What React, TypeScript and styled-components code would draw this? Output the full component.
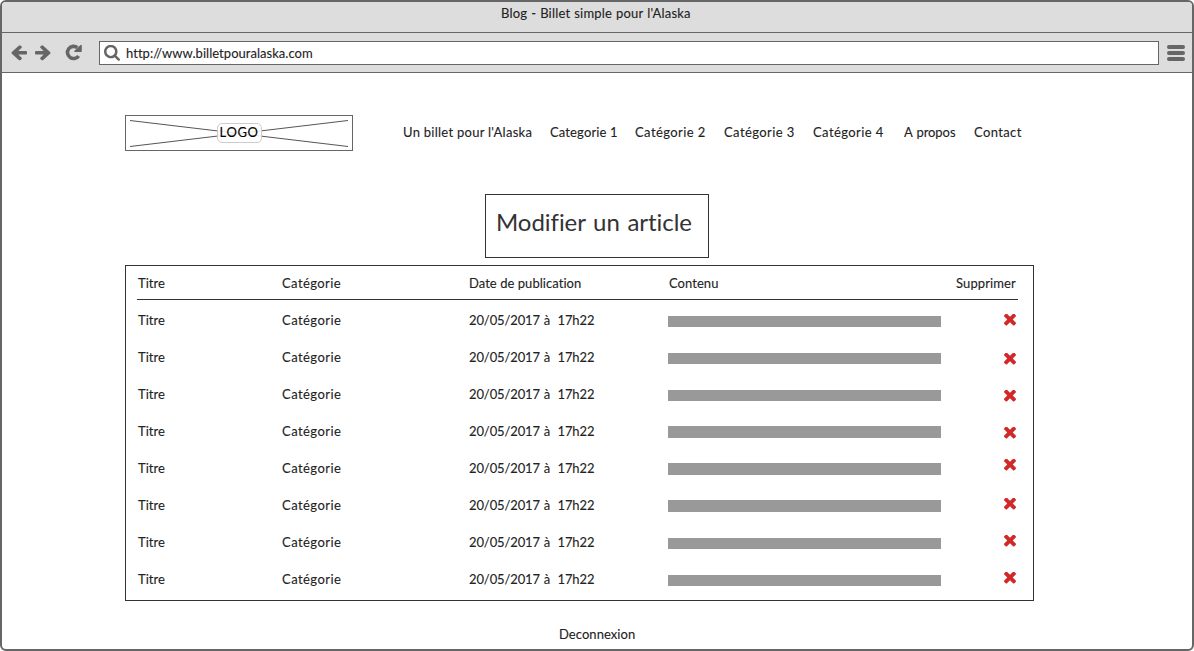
import React from "react";
import styled, { createGlobalStyle } from "styled-components";

const GlobalStyle = createGlobalStyle`
  * { box-sizing: border-box; }
  body { margin: 0; background: #fff; }
`;

const Window = styled.div`
  width: 1194px;
  height: 651px;
  border: 2px solid #666;
  border-radius: 6px;
  overflow: hidden;
  background: #fff;
  color: #222;
  font: 13px/20px Lato, "Liberation Sans", sans-serif;
  -webkit-text-stroke: 0.1px currentColor;
  white-space: pre;
`;

const Text = styled.span<{ $spacing?: number; $words?: number }>`
  letter-spacing: ${(p) => p.$spacing ?? 0}px;
  word-spacing: ${(p) => p.$words ?? 0}px;
`;

const TitleBar = styled.header`
  height: 31px;
  padding: 1px 0 0 499px;
  background: #ddd;
  border-bottom: 1px solid #666;
`;

const Toolbar = styled.div`
  height: 40px;
  display: flex;
  align-items: center;
  padding: 0 7px 0 8px;
  background: #ddd;
  border-bottom: 1px solid #666;
`;

const Glyph = styled.svg<{ $gap?: number }>`
  display: block;
  flex: none;
  margin-right: ${(p) => p.$gap ?? 0}px;
  fill: #666;
`;

const AddressBar = styled.div`
  width: 1060px;
  height: 24px;
  display: flex;
  align-items: center;
  margin-right: 8px;
  padding-left: 4px;
  border: 1px solid #666;
  background: #fff;
`;

const MenuButton = styled.div`
  width: 18px;
  display: grid;
  gap: 2px;
`;

const MenuBar = styled.div`
  height: 4px;
  border-radius: 2px;
  background: #666;
`;

const Page = styled.main`
  width: 909px;
  margin-left: 123px;
  padding-top: 42px;
`;

const Masthead = styled.div`
  display: flex;
  height: 36px;
  margin-bottom: 43px;
`;

const Logo = styled.div`
  position: relative;
  width: 228px;
  height: 36px;
  display: flex;
  align-items: center;
  justify-content: center;
  border: 1px solid #666;
`;

const LogoCross = styled.svg`
  position: absolute;
  inset: 0;
  stroke: #555;
  stroke-width: 1;
`;

const LogoLabel = styled.div`
  position: relative;
  width: 45px;
  height: 20px;
  padding-left: 2px;
  line-height: 17px;
  border: 1px solid #ccc;
  border-radius: 5px;
  background: rgba(255, 255, 255, 0.85);
  color: #000;
`;

const Nav = styled.nav`
  display: grid;
  grid-template-columns: 147px 85px 89px 89px 91px 70px 60px;
  padding: 7px 0 0 50px;
`;

const Heading = styled.h1`
  width: 224px;
  height: 64px;
  margin: 0 0 7px 360px;
  padding: 12px 0 0 10px;
  border: 1px solid #333;
  color: #333;
  font-size: 24px;
  font-weight: 400;
  line-height: 30px;
  -webkit-text-stroke: 0;
`;

const Table = styled.section`
  height: 336px;
  padding: 0 15px 0 11px;
  border: 1px solid #333;
`;

const Row = styled.div`
  height: 37px;
  display: grid;
  grid-template-columns: 144px 187px 200px 287px 63px;
  line-height: 37px;

  > ${Text} {
    padding-left: 1px;
  }
`;

const HeaderRow = styled(Row)`
  height: 34px;
  margin-bottom: 2px;
  border-bottom: 1px solid #333;
  line-height: 35px;
`;

const Bar = styled.div<{ $top: number; $height: number }>`
  width: 273px;
  height: ${(p) => p.$height}px;
  margin-top: ${(p) => p.$top}px;
  background: #999;
`;

const DeleteIcon = styled.svg<{ $top: number }>`
  display: block;
  margin: ${(p) => p.$top}px 0 0 49px;
  fill: #d22828;
`;

const Footer = styled.footer`
  padding: 23px 0 0 434px;
`;

const links: { label: string; spacing: number; words?: number }[] = [
  { label: "Un billet pour l'Alaska", spacing: 0.27 },
  { label: "Categorie 1", spacing: 0.14 },
  { label: "Catégorie 2", spacing: 0.42 },
  { label: "Catégorie 3", spacing: 0.42 },
  { label: "Catégorie 4", spacing: 0.42 },
  { label: "A propos", spacing: -0.05, words: 0.8 },
  { label: "Contact", spacing: 0.38 },
];

const rows = [
  { barTop: 14, barHeight: 11, iconTop: 12 },
  { barTop: 14, barHeight: 11, iconTop: 14 },
  { barTop: 14, barHeight: 11, iconTop: 14 },
  { barTop: 13, barHeight: 12, iconTop: 14 },
  { barTop: 13, barHeight: 12, iconTop: 9 },
  { barTop: 13, barHeight: 12, iconTop: 11 },
  { barTop: 14, barHeight: 11, iconTop: 11 },
  { barTop: 14, barHeight: 11, iconTop: 11 },
];

const ARROW =
  "M1664 896v128q0 53-32.5 90.5t-84.5 37.5h-704l293 294q38 36 38 90t-38 90l-75 76q-37 37-90 37-52 0-91-37l-651-652q-37-37-37-90 0-52 37-91l651-650q38-38 91-38 52 0 90 38l75 74q38 38 38 91t-38 91l-293 293h704q52 0 84.5 37.5t32.5 90.5z";
const SEARCH =
  "M1216 832q0-185-131.5-316.5t-316.5-131.5-316.5 131.5-131.5 316.5 131.5 316.5 316.5 131.5 316.5-131.5 131.5-316.5zm512 832q0 52-38 90t-90 38q-54 0-90-38l-343-342q-179 124-399 124-143 0-273.5-55.5t-225-150-150-225-55.5-273.5 55.5-273.5 150-225 225-150 273.5-55.5 273.5 55.5 225 150 150 225 55.5 273.5q0 220-124 399l343 343q37 37 37 90z";
const CROSS =
  "M1490 1322q0 40-28 68l-136 136q-28 28-68 28t-68-28l-294-294-294 294q-28 28-68 28t-68-28l-136-136q-28-28-28-68t28-68l294-294-294-294q-28-28-28-68t28-68l136-136q28-28 68-28t68 28l294 294 294-294q28-28 68-28t68 28l136 136q28 28 28 68t-28 68l-294 294 294 294q28 28 28 68z";

export default function App() {
  return (
    <Window>
      <GlobalStyle />
      <TitleBar>
        <Text $spacing={0.2} $words={0.4}>Blog - Billet simple pour l'Alaska</Text>
      </TitleBar>
      <Toolbar>
        <Glyph width="17" height="16" viewBox="53 154 1611 1660" preserveAspectRatio="none" $gap={8}>
          <path d={ARROW} />
        </Glyph>
        <Glyph width="17" height="16" viewBox="53 154 1611 1660" preserveAspectRatio="none" $gap={13}>
          <path d={ARROW} transform="translate(1717 0) scale(-1 1)" />
        </Glyph>
        <Glyph width="17" height="17" viewBox="0 0 17 17" $gap={17}>
          <path
            d="M13.6 11.9A6.1 6.1 0 1 1 12.4 3.7"
            style={{ fill: "none", stroke: "#666", strokeWidth: 3.6 }}
          />
          <path d="M16.8 1.4V7.2Q16.8 7.9 16.1 7.9H9.8Q8.7 7.6 9.4 6.7L15.6 .9Q16.6 .4 16.8 1.4Z" />
        </Glyph>
        <AddressBar>
          <Glyph width="16" height="16" viewBox="64 148 1664 1664" $gap={6}>
            <path d={SEARCH} />
          </Glyph>
          <Text $spacing={0.03}>http://www.billetpouralaska.com</Text>
        </AddressBar>
        <MenuButton>
          <MenuBar />
          <MenuBar />
          <MenuBar />
        </MenuButton>
      </Toolbar>
      <Page>
        <Masthead>
          <Logo>
            <LogoCross width="226" height="34" viewBox="0 0 226 34">
              <path d="M4 4.5 222 30.5M4 30.5 222 4.5" />
            </LogoCross>
            <LogoLabel>
              <Text $spacing={0.65}>LOGO</Text>
            </LogoLabel>
          </Logo>
          <Nav>
            {links.map((link) => (
              <Text key={link.label} $spacing={link.spacing} $words={link.words}>
                {link.label}
              </Text>
            ))}
          </Nav>
        </Masthead>
        <Heading>
          <Text $spacing={-0.05} $words={1.6}>Modifier un article</Text>
        </Heading>
        <Table>
          <HeaderRow>
            <Text $spacing={0.05}>Titre</Text>
            <Text $spacing={0.42}>Catégorie</Text>
            <Text $spacing={0.05}>Date de publication</Text>
            <Text $spacing={0.05}>Contenu</Text>
            <Text $spacing={0.11}>Supprimer</Text>
          </HeaderRow>
          {rows.map((row, i) => (
            <Row key={i}>
              <Text $spacing={0.05}>Titre</Text>
              <Text $spacing={0.45}>Catégorie</Text>
              <Text $spacing={-0.11} $words={0.5}>{"20/05/2017 à  17h22"}</Text>
              <Bar $top={row.barTop} $height={row.barHeight} />
              <DeleteIcon $top={row.iconTop} width="12" height="12" viewBox="302 410 1188 1188">
                <path d={CROSS} />
              </DeleteIcon>
            </Row>
          ))}
        </Table>
        <Footer>
          <Text $spacing={0.06}>Deconnexion</Text>
        </Footer>
      </Page>
    </Window>
  );
}
